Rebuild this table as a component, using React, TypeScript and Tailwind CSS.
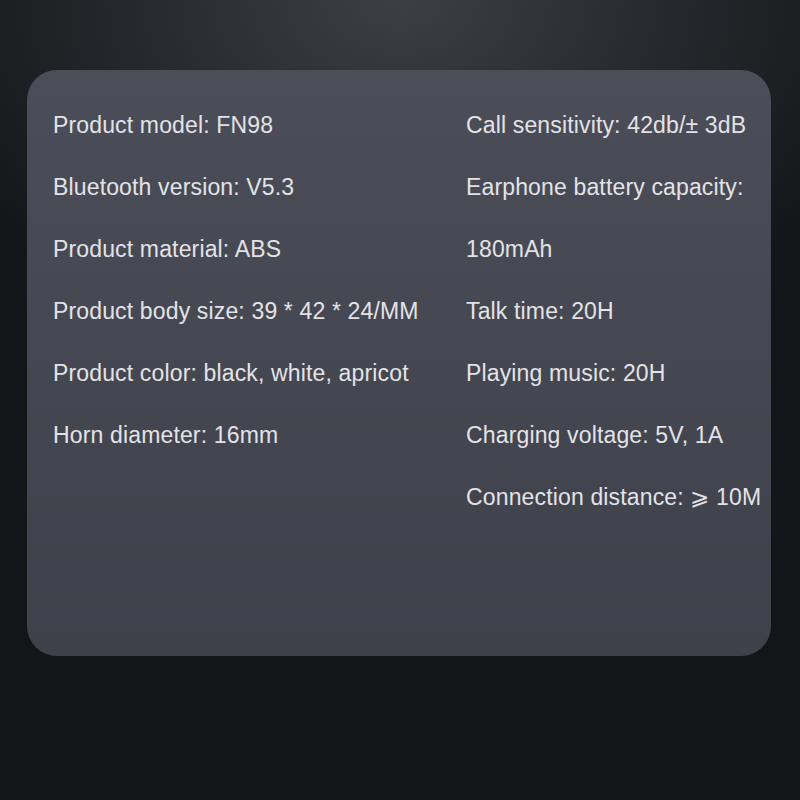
const left = [
  'Product model: FN98',
  'Bluetooth version: V5.3',
  'Product material: ABS',
  'Product body size: 39 * 42 * 24/MM',
  'Product color: black, white, apricot',
  'Horn diameter: 16mm',
]

const right = [
  'Call sensitivity: 42db/± 3dB',
  'Earphone battery capacity:',
  '180mAh',
  'Talk time: 20H',
  'Playing music: 20H',
  'Charging voltage: 5V, 1A',
  'Connection distance: ⩾ 10M',
]

export default function App() {
  return (
    <main className="w-[800px] h-[800px] bg-[#141519] bg-[radial-gradient(ellipse_65%_45%_at_50%_0%,#3e3f44_0%,#26272c_55%,#141519_100%)] pt-[70px] pl-[27px] font-['Liberation_Sans',Arial,sans-serif]">
      <div className="w-[744px] h-[586px] rounded-[30px] bg-gradient-to-b from-[#4b4e58] to-[#3e404a] pt-[24px] pl-[26px] text-[#e3e3e7] text-[23px] tracking-[0.15px]">
        <div className="grid grid-cols-[413px_1fr]">
          <div className="flex flex-col">
            {left.map((t) => (
              <div key={t} className="h-[62px] flex items-center whitespace-nowrap">{t}</div>
            ))}
          </div>
          <div className="flex flex-col">
            {right.map((t) => (
              <div key={t} className="h-[62px] flex items-center whitespace-nowrap">{t}</div>
            ))}
          </div>
        </div>
      </div>
    </main>
  )
}
